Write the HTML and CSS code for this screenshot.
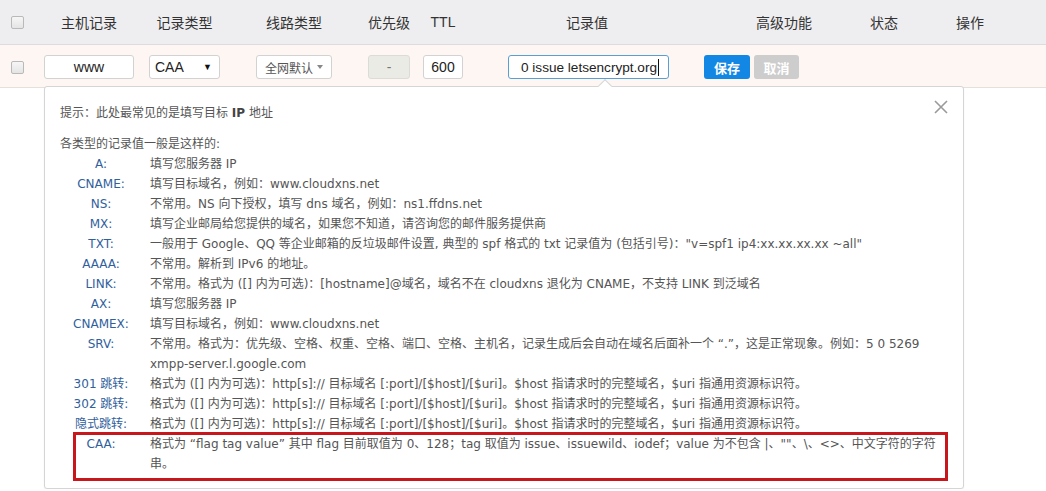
FILE: index.html
```html
<!DOCTYPE html>
<html lang="zh-CN">
<head>
<meta charset="utf-8">
<title>DNS 记录</title>
<link rel="stylesheet" href="styles.css">
</head>
<body>
<div class="table">
  <div class="thead grid">
    <div class="cell"><span class="chk"></span></div>
    <div class="cell">主机记录</div>
    <div class="cell">记录类型</div>
    <div class="cell">线路类型</div>
    <div class="cell">优先级</div>
    <div class="cell">TTL</div>
    <div class="cell">记录值</div>
    <div class="cell">高级功能</div>
    <div class="cell">状态</div>
    <div class="cell">操作</div>
  </div>
  <div class="trow grid">
    <div class="cell"><span class="chk"></span></div>
    <div class="cell"><span class="field host">www</span></div>
    <div class="cell"><span class="field select">CAA<span class="tri">▼</span></span></div>
    <div class="cell"><span class="field line">全网默认<span class="caret"></span></span></div>
    <div class="cell"><span class="field prio">-</span></div>
    <div class="cell"><span class="field ttl">600</span></div>
    <div class="cell"><span class="field value">0 issue letsencrypt.org<span class="cursor"></span></span></div>
    <div class="cell left">
      <span class="btn save">保存</span>
      <span class="btn cancel">取消</span>
    </div>
    <div class="cell"></div>
    <div class="cell"></div>
  </div>
  <div class="pop">
    <span class="arrow"></span>
    <svg class="close" width="14" height="14" viewBox="0 0 14 14"><path d="M1 1L13 13M13 1L1 13" stroke="#9a9a9a" stroke-width="1.6" fill="none"/></svg>
    <p class="tip">提示：此处最常见的是填写目标 <b>IP</b> 地址</p>
    <p class="sub">各类型的记录值一般是这样的:</p>
    <dl class="types">
      <dt>A:</dt><dd>填写您服务器 IP</dd>
      <dt>CNAME:</dt><dd>填写目标域名，例如：www.cloudxns.net</dd>
      <dt>NS:</dt><dd>不常用。NS 向下授权，填写 dns 域名，例如：ns1.ffdns.net</dd>
      <dt>MX:</dt><dd>填写企业邮局给您提供的域名，如果您不知道，请咨询您的邮件服务提供商</dd>
      <dt>TXT:</dt><dd>一般用于 Google、QQ 等企业邮箱的反垃圾邮件设置, 典型的 spf 格式的 txt 记录值为 (包括引号)："v=spf1 ip4:xx.xx.xx.xx ~all"</dd>
      <dt>AAAA:</dt><dd>不常用。解析到 IPv6 的地址。</dd>
      <dt>LINK:</dt><dd>不常用。格式为 ([] 内为可选)：[hostname]@域名，域名不在 cloudxns 退化为 CNAME，不支持 LINK 到泛域名</dd>
      <dt>AX:</dt><dd>填写您服务器 IP</dd>
      <dt>CNAMEX:</dt><dd>填写目标域名，例如：www.cloudxns.net</dd>
      <dt>SRV:</dt><dd>不常用。格式为：优先级、空格、权重、空格、端口、空格、主机名，记录生成后会自动在域名后面补一个 “.”，这是正常现象。例如：5 0 5269<br>xmpp-server.l.google.com</dd>
      <dt>301 跳转:</dt><dd>格式为 ([] 内为可选)：http[s]:// 目标域名 [:port]/[$host]/[$uri]。$host 指请求时的完整域名，$uri 指通用资源标识符。</dd>
      <dt>302 跳转:</dt><dd>格式为 ([] 内为可选)：http[s]:// 目标域名 [:port]/[$host]/[$uri]。$host 指请求时的完整域名，$uri 指通用资源标识符。</dd>
      <dt>隐式跳转:</dt><dd>格式为 ([] 内为可选)：http[s]:// 目标域名 [:port]/[$host]/[$uri]。$host 指请求时的完整域名，$uri 指通用资源标识符。</dd>
      <dt class="caa">CAA:</dt><dd class="caa-val">格式为 “flag tag value” 其中 flag 目前取值为 0、128；tag 取值为 issue、issuewild、iodef；value 为不包含 |、""、\、&lt;&gt;、中文字符的字符<br>串。</dd>
    </dl>
  </div>
</div>
</body>
</html>
```
FILE: styles.css
```css
* { box-sizing: border-box; }
html, body { margin: 0; padding: 0; background: #fff; }
body {
  font-family: "Liberation Sans", Arial, "Noto Sans CJK SC", sans-serif;
  font-size: 14px;
  color: #333;
}
.grid {
  display: grid;
  grid-template-columns: 36px 106px 85px 134px 56px 52px 236px 158px 42px 130px 1fr;
}
.cell {
  display: flex;
  align-items: center;
  justify-content: center;
  white-space: nowrap;
}
.cell.left { justify-content: flex-start; gap: 4px; }
.thead {
  height: 45px;
  background: #eeeef0;
  border-bottom: 1px solid #dcdcdc;
}
.trow {
  height: 43px;
  background: #fdf6f3;
  border-bottom: 1px solid #e6e0dd;
  padding-top: 2px;
}
.chk {
  display: inline-block;
  width: 13px;
  height: 13px;
  border: 1px solid #b9b9b9;
  border-radius: 2px;
  background: linear-gradient(#f6f6f6, #e4e4e4);
  margin-left: -1px;
}
.field {
  display: inline-flex;
  align-items: center;
  height: 24px;
  border: 1px solid #d2d2d2;
  border-radius: 3px;
  background: #fff;
  font-size: 14px;
  color: #222;
}
.host { width: 90px; justify-content: center; }
.select { width: 71px; padding: 0 7px 0 5px; justify-content: space-between; }
.tri { font-size: 9px; color: #111; }
.line { width: 76px; padding-left: 8px; font-size: 12px; color: #555; font-family: "Noto Sans CJK SC", sans-serif; }
.caret {
  width: 0; height: 0;
  border-left: 3.5px solid transparent;
  border-right: 3.5px solid transparent;
  border-top: 4px solid #888;
  margin-left: 4px;
}
.prio { width: 42px; justify-content: center; background: #ebebe6; border-color: #dcdcd6; color: #777; }
.ttl { width: 40px; justify-content: center; }
.value { width: 161px; padding-left: 12px; border-color: #5a9fd2; margin-left: 3px; font-size: 13.6px; }
.cursor { display: inline-block; width: 1px; height: 17px; background: #111; margin-left: 1px; }
.btn {
  display: inline-flex;
  align-items: center;
  justify-content: center;
  height: 24px;
  width: 46px;
  border-radius: 3px;
  color: #fff;
  font-weight: bold;
  font-size: 13px;
  font-family: "Noto Sans CJK SC", sans-serif;
}
.save { background: #1387e4; margin-left: -1px; }
.cancel { background: #cdcdcd; width: 45px; }

.pop {
  position: relative;
  margin: -2px 0 0 44px;
  width: 920px;
  border: 1px solid #d5d5d5;
  border-radius: 3px;
  background: #fff;
  box-shadow: 0 1px 2px rgba(0,0,0,0.06);
  padding: 16px 18px 14px 15px;
  font-family: "DejaVu Sans", Verdana, "Noto Sans CJK SC", sans-serif;
  font-size: 12px;
  line-height: 20px;
  color: #555;
}
.arrow {
  position: absolute;
  top: -6px;
  left: 555px;
  width: 10px;
  height: 10px;
  background: #fff;
  border-left: 1px solid #d5d5d5;
  border-top: 1px solid #d5d5d5;
  transform: rotate(45deg);
}
.close { position: absolute; top: 13px; right: 15px; }
.tip { margin: 0 0 11px; }
.tip b { color: #444; }
.sub { margin: 0; }
.types {
  display: grid;
  grid-template-columns: 82px 1fr;
  column-gap: 8px;
  margin: 0;
}
.types dt { text-align: center; color: #30609c; white-space: nowrap; }
.types dd { margin: 0; white-space: nowrap; }
.types dd.caa-val { position: relative; }
.types dd.caa-val::after {
  content: "";
  position: absolute;
  left: -77px;
  right: -3px;
  top: -2px;
  bottom: -7px;
  border: 3px solid #c8161d;
  pointer-events: none;
}
```
